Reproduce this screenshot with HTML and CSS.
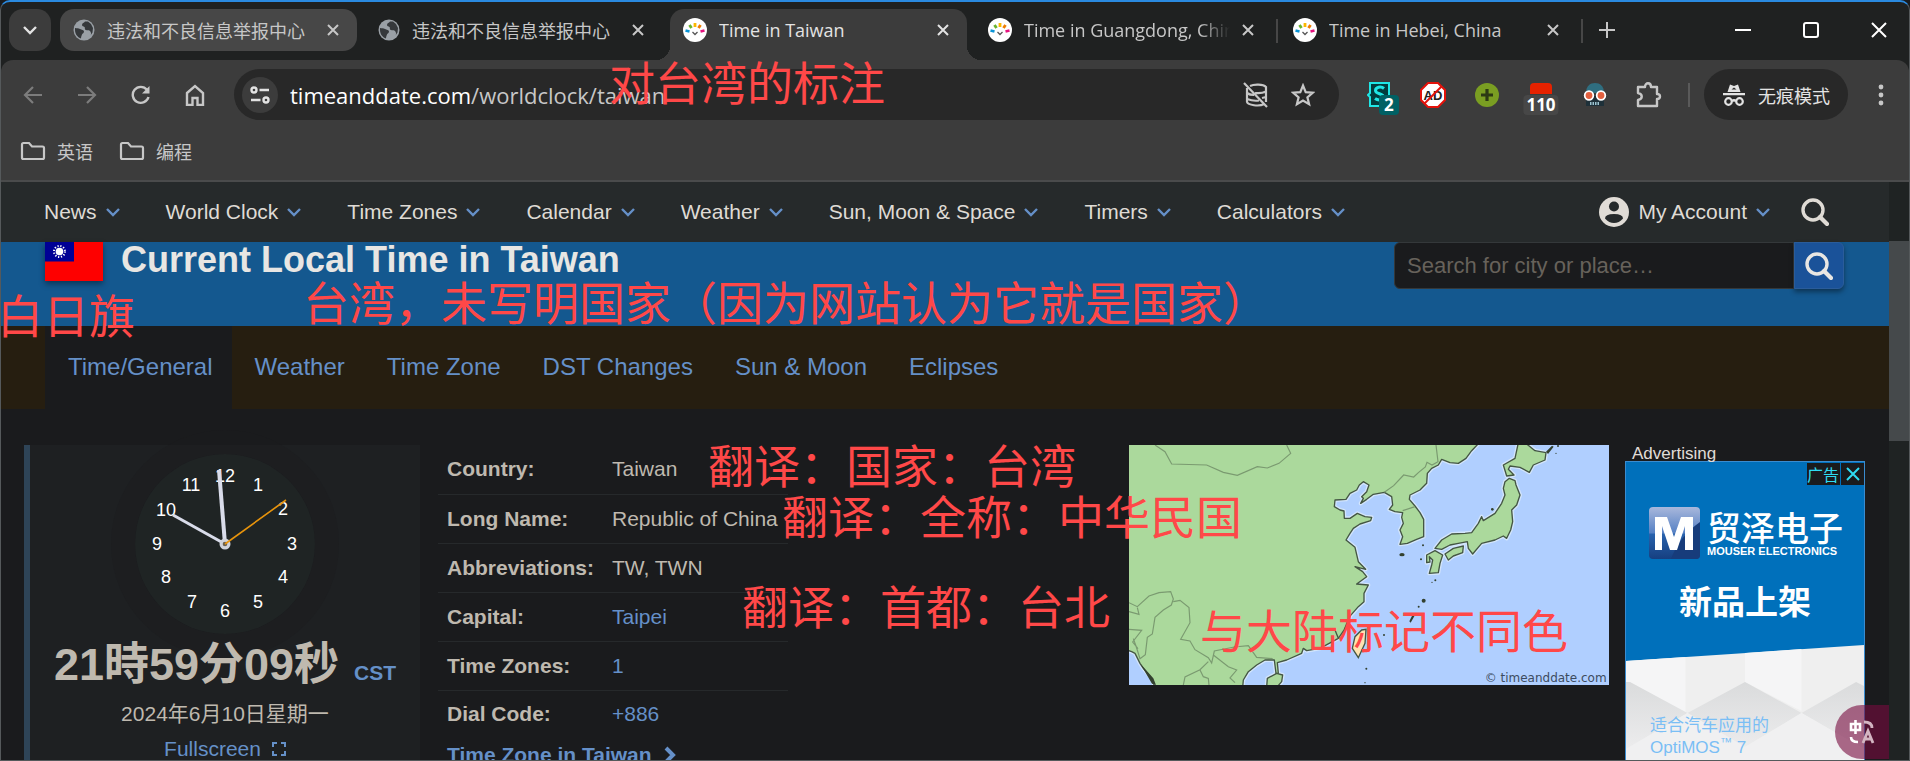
FILE: index.html
```html
<!DOCTYPE html>
<html lang="zh-CN">
<head>
<meta charset="utf-8">
<title>Time in Taiwan</title>
<link rel="stylesheet" href="styles.css">
</head>
<body>
<svg class="defs" aria-hidden="true">
  <symbol id="x" viewBox="0 0 12 12"><path d="M1 1l10 10M11 1L1 11" fill="none" stroke="currentColor" stroke-width="2"/></symbol>
  <symbol id="chev" viewBox="0 0 14 10"><path d="M1 2l6 6 6-6" fill="none" stroke="currentColor" stroke-width="2.4"/></symbol>
  <symbol id="globe" viewBox="0 0 22 22"><circle cx="11" cy="11" r="10.5" fill="#9aa0a6"/><path d="M12 2.5c-1 1.600-3 1.500-3 3.500 0 1.500 1.500 1 2.500 2s-.5 2.500 1.500 3 3-.5 4 1 1.500 2.500.5 4.500l2-3 .5-4.500-2-4-3-2.500zM2 9c1.500.5 3.500 0 5 1s4 1 4 2.500-1.500 2-2 3-1 3-1 4c-3-1-6-4-6-8.500z" fill="#35383b"/></symbol>
  <symbol id="sun" viewBox="0 0 24 24"><circle cx="12" cy="12" r="12" fill="#fff"/><g stroke-width="2.800" fill="none"><path d="M12 5v4" stroke="#fbb800"/><path d="M6.500 7l2 3" stroke="#6ab42d"/><path d="M17.500 7l-2 3" stroke="#ef7d00"/><path d="M2.500 12.500l4 1" stroke="#0a94d6"/><path d="M21.500 12.500l-4 1" stroke="#e5127d"/></g><path d="M9.500 14l2.500 2.500 2.500-2.500" stroke="#555" stroke-width="1.300" fill="none"/></symbol>
  <symbol id="mag" viewBox="0 0 28 28"><circle cx="12" cy="12" r="10" fill="none" stroke="currentColor" stroke-width="3.400"/><path d="M19 19l7 7" stroke="currentColor" stroke-width="4.200" stroke-linecap="round"/></symbol>
  <symbol id="folder" viewBox="0 0 26 20"><path d="M2 3.500C2 2.500 2.500 2 3.500 2H9l3 3.500h10.500c1 0 1.500.5 1.500 1.500v9.500c0 1-.5 1.500-1.500 1.500h-19C2.500 18 2 17.500 2 16.500z" fill="none" stroke="currentColor" stroke-width="2.200"/></symbol>
</svg>

<div class="window">
  <header class="tabstrip">
    <button class="tabsearch" aria-label="搜索标签页"><svg width="14" height="10"><use href="#chev"/></svg></button>
    <div class="tab hover"><svg class="fav" width="22" height="22"><use href="#globe"/></svg><span class="title">违法和不良信息举报中心</span><button class="close" aria-label="关闭"><svg width="12" height="12"><use href="#x"/></svg></button></div>
    <div class="tab"><svg class="fav" width="22" height="22"><use href="#globe"/></svg><span class="title">违法和不良信息举报中心</span><button class="close" aria-label="关闭"><svg width="12" height="12"><use href="#x"/></svg></button></div>
    <div class="tab active"><svg class="fav" width="24" height="24"><use href="#sun"/></svg><span class="title">Time in Taiwan</span><button class="close" aria-label="关闭"><svg width="12" height="12"><use href="#x"/></svg></button></div>
    <div class="tab ruled"><svg class="fav" width="24" height="24"><use href="#sun"/></svg><span class="title fade">Time in Guangdong, China</span><button class="close" aria-label="关闭"><svg width="12" height="12"><use href="#x"/></svg></button></div>
    <div class="tab ruled"><svg class="fav" width="24" height="24"><use href="#sun"/></svg><span class="title">Time in Hebei, China</span><button class="close" aria-label="关闭"><svg width="12" height="12"><use href="#x"/></svg></button></div>
    <button class="newtab" aria-label="新标签页"><svg width="16" height="16" viewBox="0 0 16 16"><path d="M8 0v16M0 8h16" stroke="currentColor" stroke-width="2"/></svg></button>
    <div class="winctl">
      <button aria-label="最小化"><svg width="16" height="16" viewBox="0 0 16 16"><path d="M0 8h16" stroke="currentColor" stroke-width="2"/></svg></button>
      <button aria-label="最大化"><svg width="16" height="16" viewBox="0 0 16 16"><rect x="1" y="1" width="14" height="14" rx="2" fill="none" stroke="currentColor" stroke-width="2"/></svg></button>
      <button aria-label="关闭窗口"><svg width="16" height="16" viewBox="0 0 16 16"><path d="M1 1l14 14M15 1L1 15" stroke="currentColor" stroke-width="2"/></svg></button>
    </div>
  </header>

  <div class="toolbar">
    <button class="tool dim" aria-label="后退"><svg width="20" height="20" viewBox="0 0 20 20"><path d="M19 10H2M10 2l-8 8 8 8" fill="none" stroke="currentColor" stroke-width="2.200"/></svg></button>
    <button class="tool dim" aria-label="前进"><svg width="20" height="20" viewBox="0 0 20 20"><path d="M1 10h17M10 2l8 8-8 8" fill="none" stroke="currentColor" stroke-width="2.200"/></svg></button>
    <button class="tool" aria-label="重新加载"><svg width="20" height="20" viewBox="0 0 20 20"><path d="M17.500 12A8 8 0 1 1 16 4.800" fill="none" stroke="currentColor" stroke-width="2.400"/><path d="M18.500 1v7.500H11z" fill="currentColor"/></svg></button>
    <button class="tool" aria-label="主页"><svg width="20" height="22" viewBox="0 0 20 22"><path d="M2 9l8-7 8 7v12h-5.500v-7h-5v7H2z" fill="none" stroke="currentColor" stroke-width="2.400"/></svg></button>
    <div class="omnibox">
      <button class="site" aria-label="网站信息"><svg width="20" height="18" viewBox="0 0 20 18"><g fill="none" stroke="currentColor" stroke-width="2.400"><circle cx="4" cy="4" r="2.500"/><path d="M9.500 4H19M1 14h9.500"/><circle cx="16" cy="14" r="2.500"/></g></svg></button>
      <div class="url" role="textbox" aria-label="地址"><b>timeanddate.com</b>/worldclock/taiwan</div>
      <svg width="26" height="28" viewBox="0 0 26 28" fill="none" stroke="currentColor" stroke-width="2.200"><path d="M7 5c4-2 13-2 16 1v15M4 7v14c1 3 12 5 17 2M12 12c4 .5 8 0 11-1.500M4 12c2 1.500 4 2 7 2M4 18c4 1.500 9 2 12 1.500M19 17l4-1M1 2l23 24"/></svg>
      <svg width="24" height="24" viewBox="0 0 24 24"><path d="M12 2.500l2.700 6.600 7.100.6-5.400 4.600 1.700 6.900-6.100-3.700-6.100 3.700 1.700-6.900-5.400-4.600 7.100-.6z" fill="none" stroke="currentColor" stroke-width="2.200"/></svg>
    </div>
    <div class="exts">
      <button class="ext" aria-label="扩展 S"><svg width="24" height="26" viewBox="0 0 24 26"><path d="M3 1h19v23H3v-9l-2-2 2-2z" fill="#023c3e" stroke="#1fe6e6" stroke-width="2"/><path d="M17 6.500C14 4 8.500 5 8.500 8.500c0 4 8 2.500 8 6.500 0 3-5 4-8.500 1.500" fill="none" stroke="#1fe6e6" stroke-width="3"/></svg><span class="badge teal">2</span></button>
      <button class="ext" aria-label="AD"><svg width="26" height="26" viewBox="0 0 26 26"><path d="M8 1h10l7 7v10l-7 7H8l-7-7V8z" fill="#fff" stroke="#e3120b" stroke-width="2"/><text x="13" y="18" text-anchor="middle" font-family="Liberation Sans" font-weight="700" font-size="13" fill="#222">AD</text><path d="M4.500 21.500l17-17" stroke="#e3120b" stroke-width="2"/></svg></button>
      <button class="ext" aria-label="添加"><svg width="24" height="24" viewBox="0 0 24 24"><circle cx="12" cy="12" r="12" fill="#7a9e22"/><path d="M12 6v12M6 12h12" stroke="#2d3a14" stroke-width="3.200"/></svg></button>
      <button class="ext" aria-label="拦截"><svg width="24" height="24" viewBox="0 0 24 24"><path d="M1 11V4q0-4 4-4h14q4 0 4 4v7z" fill="#e62200"/></svg><span class="badge gray">110</span></button>
      <button class="ext" aria-label="机器人"><svg width="24" height="24" viewBox="0 0 24 24"><path d="M3 10C3 3 7 0 12 0s9 3 9 10z" fill="#2f6e80"/><path d="M3 12h18v11H3z" fill="#1e3039"/><circle cx="6" cy="12.500" r="4.300" fill="#e2603f" stroke="#fff" stroke-width="1.800"/><circle cx="18" cy="12.500" r="4.300" fill="#e2603f" stroke="#fff" stroke-width="1.800"/><path d="M7 20.500h10" stroke="#9cc3d0" stroke-width="3" stroke-dasharray="1.500 1"/></svg></button>
      <button class="ext" aria-label="扩展程序"><svg width="26" height="26" viewBox="0 0 26 26"><path d="M2 5h7c0-5 6-5 6 0h6v7c4 0 4 5 0 5v7H2v-6c5-1 5-6 0-7z" fill="none" stroke="currentColor" stroke-width="2.400" stroke-linejoin="round"/></svg></button>
    </div>
    <i class="divider"></i>
    <button class="incognito"><svg width="24" height="24" viewBox="0 0 24 24"><path d="M5.500 9L8 1.500l4 1.500 4-1.500L18.500 9zM1 10h22v2.200H1z" fill="currentColor"/><path d="M9.500 6.500l2.500-2 2.500 2z" fill="#282828"/><g fill="none" stroke="currentColor" stroke-width="2.200"><circle cx="6.500" cy="18.500" r="3.300"/><circle cx="17.500" cy="18.500" r="3.300"/><path d="M10 18q2-1.500 4 0"/></g></svg><span>无痕模式</span></button>
    <button class="menu" aria-label="菜单"><svg width="6" height="22" viewBox="0 0 6 22" fill="currentColor"><circle cx="3" cy="3" r="2.400"/><circle cx="3" cy="11" r="2.400"/><circle cx="3" cy="19" r="2.400"/></svg></button>
  </div>

  <div class="bookmarks">
    <button><svg width="26" height="20"><use href="#folder"/></svg>英语</button>
    <button><svg width="26" height="20"><use href="#folder"/></svg>编程</button>
  </div>

  <div class="viewport">
    <div class="page">
      <nav class="topnav">
        <a href="#">News<svg width="14" height="10"><use href="#chev"/></svg></a>
        <a href="#">World Clock<svg width="14" height="10"><use href="#chev"/></svg></a>
        <a href="#">Time Zones<svg width="14" height="10"><use href="#chev"/></svg></a>
        <a href="#">Calendar<svg width="14" height="10"><use href="#chev"/></svg></a>
        <a href="#">Weather<svg width="14" height="10"><use href="#chev"/></svg></a>
        <a href="#">Sun, Moon &amp; Space<svg width="14" height="10"><use href="#chev"/></svg></a>
        <a href="#">Timers<svg width="14" height="10"><use href="#chev"/></svg></a>
        <a href="#">Calculators<svg width="14" height="10"><use href="#chev"/></svg></a>
        <a href="#" class="account"><svg class="user" width="30" height="30" viewBox="0 0 30 30"><circle cx="15" cy="15" r="15" fill="#e0dcd6"/><circle cx="15" cy="9.500" r="5" fill="#262a2b"/><path d="M6 21.500q0-4.500 9-4.500t9 4.500q-4 4.500-9 4.500t-9-4.500z" fill="#262a2b"/></svg>My Account<svg width="14" height="10"><use href="#chev"/></svg></a>
        <button class="navsearch" aria-label="Search"><svg width="28" height="28"><use href="#mag"/></svg></button>
      </nav>

      <div class="banner">
        <svg class="flag" width="58" height="39" viewBox="0 0 58 39"><path d="M0 0h58v39H0z" fill="#fe0000"/><path d="M0 0h29v19.500H0z" fill="#000095"/><circle cx="14.500" cy="9.500" r="5.500" fill="none" stroke="#fff" stroke-width="2" stroke-dasharray="1.200 1.700"/><circle cx="14.500" cy="9.500" r="3.800" fill="#fff"/></svg>
        <h1>Current Local Time in Taiwan</h1>
        <form class="search"><input type="text" placeholder="Search for city or place…" aria-label="Search for city or place"><button type="button" aria-label="Search"><svg width="28" height="28"><use href="#mag"/></svg></button></form>
      </div>

      <nav class="subnav">
        <a href="#" class="on">Time/General</a><a href="#">Weather</a><a href="#">Time Zone</a><a href="#">DST Changes</a><a href="#">Sun &amp; Moon</a><a href="#">Eclipses</a>
      </nav>

      <main class="content">
        <section class="clock">
          <svg class="face" width="180" height="180" viewBox="0 0 180 180">
            <circle cx="90" cy="90" r="90" fill="#1f2424"/>
            <g fill="#fff" font-family="Liberation Sans, sans-serif" font-size="18" text-anchor="middle">
              <text x="90" y="28">12</text><text x="123" y="37">1</text><text x="148" y="61">2</text><text x="157" y="96">3</text><text x="148" y="129">4</text><text x="123" y="154">5</text><text x="90" y="163">6</text><text x="57" y="154">7</text><text x="31" y="129">8</text><text x="22" y="96">9</text><text x="31" y="62">10</text><text x="56" y="37">11</text>
            </g>
            <path d="M90 90L38 61" stroke="#d9dcea" stroke-width="3"/>
            <path d="M90 90L84 16" stroke="#d9dcea" stroke-width="4"/>
            <circle cx="90" cy="90" r="5.500" fill="#d0d3da"/><circle cx="90" cy="90" r="2.300" fill="#6d6250"/>
            <path d="M90 90L151 46" stroke="#e8940c" stroke-width="1.600"/>
          </svg>
          <div class="time"><span>21時59分09秒</span><a href="#">CST</a></div>
          <div class="date">2024年6月10日星期一</div>
          <a href="#" class="full">Fullscreen<svg width="14" height="14" viewBox="0 0 14 14"><path d="M1 5V1h4M9 1h4v4M13 9v4H9M5 13H1V9" fill="none" stroke="currentColor" stroke-width="2"/></svg></a>
        </section>

        <section class="facts">
          <table>
            <tr><th scope="row">Country:</th><td>Taiwan</td></tr>
            <tr><th scope="row">Long Name:</th><td>Republic of China</td></tr>
            <tr><th scope="row">Abbreviations:</th><td>TW, TWN</td></tr>
            <tr><th scope="row">Capital:</th><td><a href="#">Taipei</a></td></tr>
            <tr><th scope="row">Time Zones:</th><td><a href="#">1</a></td></tr>
            <tr><th scope="row">Dial Code:</th><td><a href="#">+886</a></td></tr>
          </table>
          <a href="#" class="more">Time Zone in Taiwan<svg width="12" height="18" viewBox="0 0 12 18"><path d="M2 2l7 7-7 7" fill="none" stroke="currentColor" stroke-width="4"/></svg></a>
        </section>

        <svg class="map" viewBox="27 45 1440 720" role="img" aria-label="Map">
          <defs>
            <g id="land" stroke-linejoin="round">
              <path d="M20 38H1078L1055 62 1038 85 1015 100 990 98 965 88 955 105 935 115 922 130 920 160 900 180 870 195 868 208 885 228 900 248 911 268 911 320 890 328 862 340 840 343 848 320 840 300 850 280 845 262 848 248 825 245 808 238 818 225 815 200 793 187 760 193 740 208 722 220 730 205 725 200 740 185 747 165 730 155 718 165 710 180 690 190 678 208 645 210 643 230 660 240 672 243 673 265 690 265 712 250 735 260 755 262 752 272 720 282 700 295 690 310 678 330 705 352 715 395 737 418 705 410 728 425 740 440 710 462 745 465 732 490 732 515 715 530 692 556 672 600 655 625 645 600 655 625 600 655 560 662 550 655 545 670 500 690 472 698 475 730 468 730 463 690 435 690 410 705 385 725 370 750 368 772H105L95 745 70 715 60 700 45 670 35 665 20 660z"/>
              <path d="M470 730L488 735 485 755 472 770H440L442 745zM1155 155L1168 145 1185 152 1188 165 1200 195 1190 225 1175 240 1178 275 1172 300 1160 325 1150 318 1125 330 1085 340 1058 372 1045 355 1042 335 1015 340 990 345 965 358 945 355 965 330 995 312 1035 310 1055 308 1075 280 1085 260 1090 272 1125 250 1145 220 1155 195 1150 175zM920 375L945 362 968 375 960 400 955 428 928 430 935 405 938 390 928 380 930 396 920 398zM975 372L1000 355 1030 348 1028 368 1000 378 985 390zM1195 38L1215 38 1245 62 1278 68 1275 90 1240 105 1228 127 1200 112 1170 108 1165 118 1182 135 1160 138 1150 105 1185 85z"/>
            </g>
          </defs>
          <path d="M27 45h1440v720H27z" fill="#b0cfff"/>
          <use href="#land" fill="#abd99c" stroke="#d3e5fb" stroke-width="12"/>
          <use href="#land" fill="#abd99c" stroke="#445643" stroke-width="4"/>
          <path d="M725 600L738 598 735 640 715 683 697 655 705 620z" fill="#ffe3b0" stroke="#445643" stroke-width="4"/>
          <g fill="none" stroke="#7a9a70" stroke-width="3.500"><path d="M105 45l30 20 20 37 105 3 50 22 42 9 60-26 30 4 35-14 35-30-12-25M948 45l6 50-18 10-15-8-5 14-20 16-15 14-30-6-30 32-28 20M848 242l37-12M27 518l25 12 35-32 30-10 35-3 8 22-6 18-24 15-25 22-8 50-15 10-6 52-16 12-12-38-8-22M27 598l38 3-27 35 16 20M160 515l20-4 27 22 3 45-28 50 28 5 15 26 40 24 10 16 8-36 60-12 42-4 25 35 48 4M280 675l45 35 25 10-20 24 15 14M265 695l-25 24-45 22-5 24M240 720l10 20 15 5 2 20M27 545l30 8-5-20"/></g>
          <g fill="#33412f"><ellipse cx="846" cy="374" rx="8" ry="5"/><circle cx="911" cy="512" r="6"/><path d="M868 574l12-24 5 5-13 23zM1278 65l18-18 5 3-17 22zM60 700l40 45 8 20-12-4z"/><circle cx="909" cy="346" r="3"/><circle cx="903" cy="388" r="3"/><circle cx="1117" cy="238" r="4"/><circle cx="946" cy="451" r="3"/><circle cx="936" cy="457" r="2"/><circle cx="896" cy="530" r="3"/><circle cx="792" cy="615" r="3"/><circle cx="739" cy="716" r="3"/><circle cx="1308" cy="70" r="2"/><circle cx="1314" cy="48" r="3"/><circle cx="735" cy="758" r="2"/></g>
          <text x="1460" y="757" text-anchor="end" font-family="DejaVu Sans, sans-serif" font-size="36" fill="#3d4c60">© timeanddate.com</text>
        </svg>

        <aside class="side">
          <div class="adlabel">Advertising</div>
          <div class="ad">
            <div class="choices"><span>广告</span><button aria-label="关闭广告"><svg width="14" height="14" viewBox="0 0 14 14"><path d="M1 1l12 12M13 1L1 13" stroke="currentColor" stroke-width="2"/></svg></button></div>
            <div class="brand">
              <svg width="51" height="52" viewBox="0 0 51 52"><defs><linearGradient id="g" x1="0" y1="0" x2="0" y2="1"><stop offset="0" stop-color="#a9b8dc"/><stop offset=".5" stop-color="#5580c4"/><stop offset=".52" stop-color="#2862ad"/><stop offset="1" stop-color="#163f80"/></linearGradient></defs><rect width="51" height="52" rx="4" fill="url(#g)"/><path d="M51 15Q30 30 22 52h25q4 0 4-4z" fill="#173c7b"/><path d="M6 43V10h12l7 20 7-20h12v33h-8V19l-8 24h-7l-8-24v24z" fill="#fff"/></svg>
              <div><strong>贸泽电子</strong><small>MOUSER ELECTRONICS</small></div>
            </div>
            <div class="slogan">新品上架</div>
            <div class="product">
              <svg class="cubes" viewBox="0 0 240 116" preserveAspectRatio="none">
                <defs><linearGradient id="c" x1="0" y1="0" x2="0" y2="1"><stop offset="0" stop-color="#dadbdc"/><stop offset="1" stop-color="#ececed"/></linearGradient></defs>
                <path d="M0 16L240 0v116H0z" fill="#efefef"/><path d="M0 16l60-4v56L4 37 0 39zM120 8l57-4v62l-57-29z" fill="#f5f5f6"/>
                <path d="M62 68l58-31 57 31-57 34zM0 37h4l58 31L0 104zM240 41l-8-4-55 31 63 36z" fill="url(#c)"/>
                <path d="M0 104l62-36 58 34v14H0zM120 102l57-34 63 36v12H120z" fill="#f0f0f1"/>
              </svg>
              <a href="#">适合汽车应用的<br>OptiMOS<sup>™</sup> 7</a>
            </div>
          </div>
        </aside>
      </main>
      <button class="translate" aria-label="翻译"><svg width="26" height="24" viewBox="0 0 26 24"><g fill="none" stroke="#fff" stroke-width="2.600"><path d="M2 4h9v6H2zM6.500 0v14"/><path d="M2 17q0 5 7 5"/></g><g fill="none" stroke="#d3b5c2" stroke-width="2.800"><path d="M15 2q8 0 8 6M14 23l5-12 5 12M16 19h6"/></g></svg></button>
    </div>
    <div class="scrollbar"><div class="thumb"></div></div>
  </div>

  <div class="notes">
    <p class="n1">对台湾的标注</p>
    <p class="n2">台湾，未写明国家（因为网站认为它就是国家）</p>
    <p class="n3">白日旗</p>
    <p class="n4">翻译：国家：台湾</p>
    <p class="n5">翻译：全称：中华民国</p>
    <p class="n6">翻译：首都：台北</p>
    <p class="n7">与大陆标记不同色</p>
  </div>
</div>
</body>
</html>
```
FILE: styles.css
```css
* { box-sizing: border-box; }
body { margin: 0; background: #1a1b1d; }
button { border: 0; padding: 0; background: none; color: inherit; font: inherit; display: flex; align-items: center; justify-content: center; }
a { color: #6590c8; text-decoration: none; }
svg { flex: none; display: block; }
.defs { display: none; }

.window {
  position: relative; display: flex; flex-direction: column; height: 100vh; overflow: hidden;
  border: 1px solid #55595b; border-top: 2px solid #2a8ae0; border-radius: 10px 10px 0 0;
  background: #1f2121; color: #c7c7c7;
  font-family: "Noto Sans", "Noto Sans CJK SC", sans-serif; font-size: 18px;
}

/* Browser tabs */
.tabstrip { display: flex; height: 58px; padding: 7px 0 0 8px; flex: none; }
.tabsearch { width: 42px; height: 42px; margin-right: 9px; border-radius: 14px; background: #3c3c3c; color: #e3e3e3; }
.tab { position: relative; display: flex; align-items: center; width: 297px; height: 42px; margin-right: 8px; padding: 0 18px 0 13px; border-radius: 14px; }
.tab.hover { background: #474747; }
.tab.active { height: 51px; padding-bottom: 9px; background: #3c3c3c; border-radius: 14px 14px 0 0; color: #e3e3e3; }
.tab.active::before, .tab.active::after { content: ""; position: absolute; bottom: 0; width: 14px; height: 14px; }
.tab.active::before { right: 100%; background: radial-gradient(circle at 0 0, transparent 14px, #3c3c3c 14px); }
.tab.active::after { left: 100%; background: radial-gradient(circle at 100% 0, transparent 14px, #3c3c3c 14px); }
.tab.ruled::after { content: ""; position: absolute; right: -6px; top: 10px; width: 2px; height: 24px; background: #474747; }
.title { flex: 1; margin: 0 12px; overflow: hidden; white-space: nowrap; font-family: "Open Sans", "Noto Sans CJK SC", sans-serif; }
.title.fade { mask-image: linear-gradient(to right, #000 85%, transparent); }
.newtab { width: 42px; height: 42px; margin-left: 1px; }
.winctl { display: flex; margin-left: auto; color: #fff; }
.winctl button { width: 68px; height: 42px; }
.winctl button:last-child { width: 64px; padding-left: 4px; }

/* Toolbar */
.toolbar { display: flex; align-items: center; height: 69px; padding: 0 16px 0 5px; background: #3c3c3c; border-radius: 12px 12px 0 0; flex: none; }
.tool { width: 54px; height: 51px; color: #c7c7c7; }
.tool.dim { color: #7c7c7c; }
.omnibox { flex: 1; display: flex; align-items: center; gap: 22px; height: 51px; margin-left: 12px; padding: 0 24px 0 8px; border-radius: 26px; background: #282828; }
.site { width: 36px; height: 36px; margin-right: -10px; border-radius: 50%; background: #3c3c3c; color: #e3e3e3; }
.url { flex: 1; font-family: "Open Sans", sans-serif; font-size: 22px; line-height: 48px; }
.url b { font-weight: 400; color: #fff; }
.exts { display: flex; margin-left: 13px; }
.ext { position: relative; width: 54px; height: 40px; }
.badge { position: absolute; top: 20px; border-radius: 4px; color: #fff; font: 700 17px/20px "Open Sans", sans-serif; padding: 0 5px; }
.badge.teal { left: 27px; background: #006064; }
.badge.gray { left: 50%; transform: translateX(-50%); padding: 0 3px; background: #474747; }
.divider { width: 2px; height: 24px; margin: 0 14px 0 12px; background: #5a5a5a; }
.incognito { height: 51px; padding: 0 18px; gap: 12px; border-radius: 26px; background: #282828; color: #e3e3e3; white-space: nowrap; }
.menu { width: 40px; height: 40px; margin-left: 13px; margin-right: -8px; }
.bookmarks { display: flex; gap: 26px; height: 53px; padding: 0 19px 7px; background: #3c3c3c; border-bottom: 2px solid #4a4b4c; flex: none; }
.bookmarks button { gap: 11px; }

/* Web page */
.viewport { display: flex; flex: 1; min-height: 0; }
.page { position: relative; flex: 1; min-width: 0; overflow: hidden; background: #1a1b1d; color: #bfb9af; font-family: "Liberation Sans", "Noto Sans CJK SC", sans-serif; font-size: 21px; }
.scrollbar { width: 20px; padding-top: 59px; background: #1f2323; }
.thumb { height: 200px; background: #45494b; }
.topnav { display: flex; align-items: center; gap: 46px; height: 60px; padding: 0 60px 0 43px; background: #262a2b; }
.topnav a { display: flex; align-items: center; gap: 9px; color: #dfdbd5; white-space: nowrap; }
.topnav a > svg { color: #6590c8; }
.topnav .account { margin-left: auto; }
.navsearch { margin-left: -15px; color: #dfdbd5; }
.banner { display: flex; align-items: flex-start; height: 84px; padding: 0 45px 0 44px; background: #14588f; }
.flag { box-shadow: 0 3px 6px #0006; }
h1 { margin: 0 auto 0 18px; font-size: 36px; line-height: 36px; color: #e8e6e3; }
.search { display: flex; width: 450px; height: 47px; }
.search input { flex: 1; min-width: 0; padding: 0 12px; border: 1px solid #34383a; border-radius: 6px 0 0 6px; background: #1a1b1d; color: #e8e6e3; font: 22px "Liberation Sans", sans-serif; }
.search input::placeholder { color: #67625b; opacity: 1; }
.search button { width: 50px; border: 1px solid #2a5c9a; border-radius: 0 6px 6px 0; background: #1a5299; color: #e8e6e3; box-shadow: 0 3px 5px #0006; }
.subnav { display: flex; height: 83px; padding-left: 44px; background: #261e10; font-size: 24px; line-height: 82px; }
.subnav a { padding: 0 19px 0 23px; }
.subnav .on { background: #1a1b1d; }
.content { display: flex; align-items: flex-start; gap: 16px; padding: 36px 24px 0 23px; }

.clock { display: flex; flex-direction: column; align-items: center; width: 396px; min-height: 400px; padding-top: 9px; border-left: 6px solid #2e4457; background: #1e2022; }
.face { border-radius: 50%; box-shadow: 0 0 0 24px rgba(27, 28, 29, .4); }
.time { display: flex; align-items: baseline; gap: 15px; margin-top: 3px; font-size: 45px; line-height: 56px; font-weight: 700; white-space: nowrap; }
.time a { font-size: 21px; }
.date { line-height: 26px; }
.full { display: flex; align-items: center; gap: 11px; margin-top: 9px; line-height: 26px; }

.facts { width: 350px; margin-left: 2px; }
table { width: 100%; border-collapse: collapse; }
th, td { height: 49px; padding: 0 0 0 9px; border-bottom: 1px solid #26292b; text-align: left; }
th { width: 165px; }
tr:last-child > * { height: 48px; border-bottom: 0; }
.more { display: flex; align-items: center; gap: 12px; padding: 4px 0 0 9px; line-height: 26px; font-weight: 700; }
.map { width: 480px; height: 240px; margin-left: auto; }
.side { width: 240px; }
.adlabel { height: 16px; padding-left: 7px; font-size: 17px; line-height: 17px; color: #e0ddd8; }
.ad { display: flex; flex-direction: column; height: 340px; border: 1px solid #3a8cd0; background: #0070bb; color: #fff; }
.choices { display: flex; gap: 1px; justify-content: flex-end; padding: 1px 0 0; height: 23px; font-size: 16px; line-height: 22px; color: #2fdcf2; }
.choices > * { background: #1a1b1d; }
.choices span { width: 33px; font-family: "Noto Sans CJK SC", sans-serif; }
.choices button { width: 23px; }
.brand { display: flex; gap: 7px; padding: 22px 0 0 23px; }
.brand strong { display: block; margin-top: 3px; font: 500 34px/34px "Noto Sans CJK SC", sans-serif; }
.brand small { display: block; font: 700 11px/14px "Liberation Sans", sans-serif; white-space: nowrap; }
.slogan { margin-top: 21px; text-align: center; font: 700 33px/40px "Noto Sans CJK SC", sans-serif; }
.product { position: relative; flex: 1; margin-top: 25px; padding: 70px 24px 0; overflow: hidden; }
.cubes { position: absolute; inset: 0; width: 100%; height: 116px; }
.product a { position: relative; display: block; color: #7abef5; font-size: 17px; line-height: 22px; }
.product sup { font-size: 12px; line-height: 0; }
.translate { position: absolute; right: 0; bottom: 1px; width: 54px; height: 54px; border-radius: 27px 0 0 27px; background: rgba(120, 12, 64, .6); }

/* Red remarks laid over the window */
.notes p { position: absolute; margin: 0; color: #ff4848; font: 400 46px/50px "Noto Sans CJK SC", sans-serif; white-space: nowrap; }
.notes .n1 { left: 608px; top: 53px; }
.notes .n2 { left: 302px; top: 273px; }
.notes .n3 { left: -4px; top: 286px; }
.notes .n4 { left: 707px; top: 436px; }
.notes .n5 { left: 781px; top: 487px; }
.notes .n6 { left: 741px; top: 577px; }
.notes .n7 { left: 1199px; top: 601px; }
```
